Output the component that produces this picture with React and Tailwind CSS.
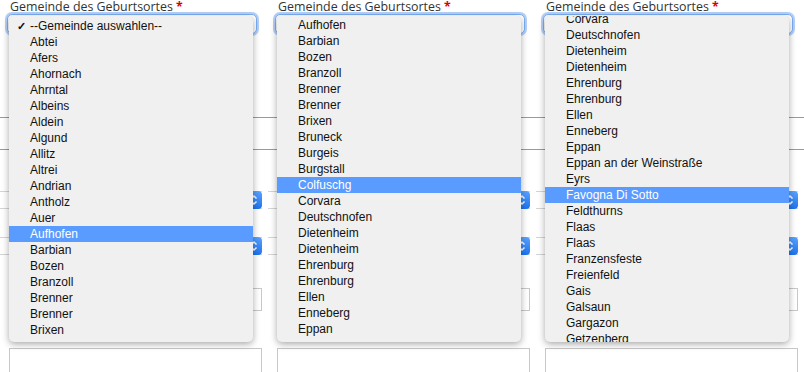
import React from 'react';

const panels = [
  {
    offset: 'mt-[2px]',
    highlight: 'Aufhofen',
    checked: '--Gemeinde auswahlen--',
    items: ['--Gemeinde auswahlen--', 'Abtei', 'Afers', 'Ahornach', 'Ahrntal', 'Albeins', 'Aldein', 'Algund', 'Allitz', 'Altrei', 'Andrian', 'Antholz', 'Auer', 'Aufhofen', 'Barbian', 'Bozen', 'Branzoll', 'Brenner', 'Brenner', 'Brixen'],
  },
  {
    offset: 'mt-[1px]',
    highlight: 'Colfuschg',
    items: ['Aufhofen', 'Barbian', 'Bozen', 'Branzoll', 'Brenner', 'Brenner', 'Brixen', 'Bruneck', 'Burgeis', 'Burgstall', 'Colfuschg', 'Corvara', 'Deutschnofen', 'Dietenheim', 'Dietenheim', 'Ehrenburg', 'Ehrenburg', 'Ellen', 'Enneberg', 'Eppan'],
  },
  {
    offset: '-mt-[5px]',
    highlight: 'Favogna Di Sotto',
    items: ['Corvara', 'Deutschnofen', 'Dietenheim', 'Dietenheim', 'Ehrenburg', 'Ehrenburg', 'Ellen', 'Enneberg', 'Eppan', 'Eppan an der Weinstraße', 'Eyrs', 'Favogna Di Sotto', 'Feldthurns', 'Flaas', 'Flaas', 'Franzensfeste', 'Freienfeld', 'Gais', 'Galsaun', 'Gargazon', 'Getzenberg'],
  },
];

function Stepper() {
  return (
    <div className="w-[16px] h-full rounded-[4px] bg-gradient-to-b from-[#5aa2ff] to-[#1a73f0] flex items-center justify-center">
      <svg width="8" height="12" viewBox="0 0 8 12" fill="none" stroke="white" strokeWidth="1.5">
        <path d="M1.5 4.5 L4 2 L6.5 4.5" />
        <path d="M1.5 7.5 L4 10 L6.5 7.5" />
      </svg>
    </div>
  );
}

function Panel({ panel }) {
  return (
    <div className="relative w-[268px] h-[372px] shrink-0 overflow-hidden">
      {/* form behind the open menu */}
      <div className="h-[14px] leading-[14px] pl-[10px] text-[12.4px] text-[#333] whitespace-nowrap" style={{ fontFamily: '"Open Sans", sans-serif' }}>
        Gemeinde des Geburtsortes <span className="text-[#d00] font-bold">*</span>
      </div>
      <div className="ml-[7px] w-[250px] h-[20px] rounded-[5px] border border-[#7aaef5] shadow-[0_0_0_2px_rgba(90,150,240,0.45)] bg-white" />
      <div className="mt-[83px] h-[33px] border-y border-[#9a9a9a]" />
      <div className="mt-[41px] w-[262px] h-[18px] border-y border-[#d4d4d4] flex justify-end">
        <div className="-my-px"><Stepper /></div>
      </div>
      <div className="mt-[28px] w-[262px] h-[18px] border-y border-[#d4d4d4] flex justify-end">
        <div className="-my-px"><Stepper /></div>
      </div>
      <div className="mt-[33px] ml-[9px] w-[253px] h-[23px] border border-[#c8c8c8]" />
      <div className="mt-[37px] ml-[9px] w-[253px] h-[30px] border border-[#c8c8c8]" />

      {/* open dropdown menu */}
      <div
        className="absolute left-[9px] top-[16px] w-[244px] h-[326px] rounded-[5px] bg-[#f0f0f0] overflow-hidden shadow-[0_2px_7px_rgba(0,0,0,0.35)]"
        style={{ fontFamily: '"Liberation Sans", Arial, sans-serif' }}
      >
        <div className={panel.offset}>
          {panel.items.map((name, i) => {
            const hl = name === panel.highlight;
            return (
              <div key={i} className={`relative h-[16px] leading-[16px] pl-[21px] text-[12px] whitespace-nowrap ${hl ? 'bg-[#5a9bff] text-white' : 'text-[#111]'}`}>
                {panel.checked === name && <span className="absolute left-[8px] text-[11px] font-bold">✓</span>}
                {name}
              </div>
            );
          })}
        </div>
      </div>
    </div>
  );
}

export default function App() {
  return (
    <div className="w-[804px] h-[372px] bg-white flex overflow-hidden">
      {panels.map((p, i) => (
        <Panel key={i} panel={p} />
      ))}
    </div>
  );
}
